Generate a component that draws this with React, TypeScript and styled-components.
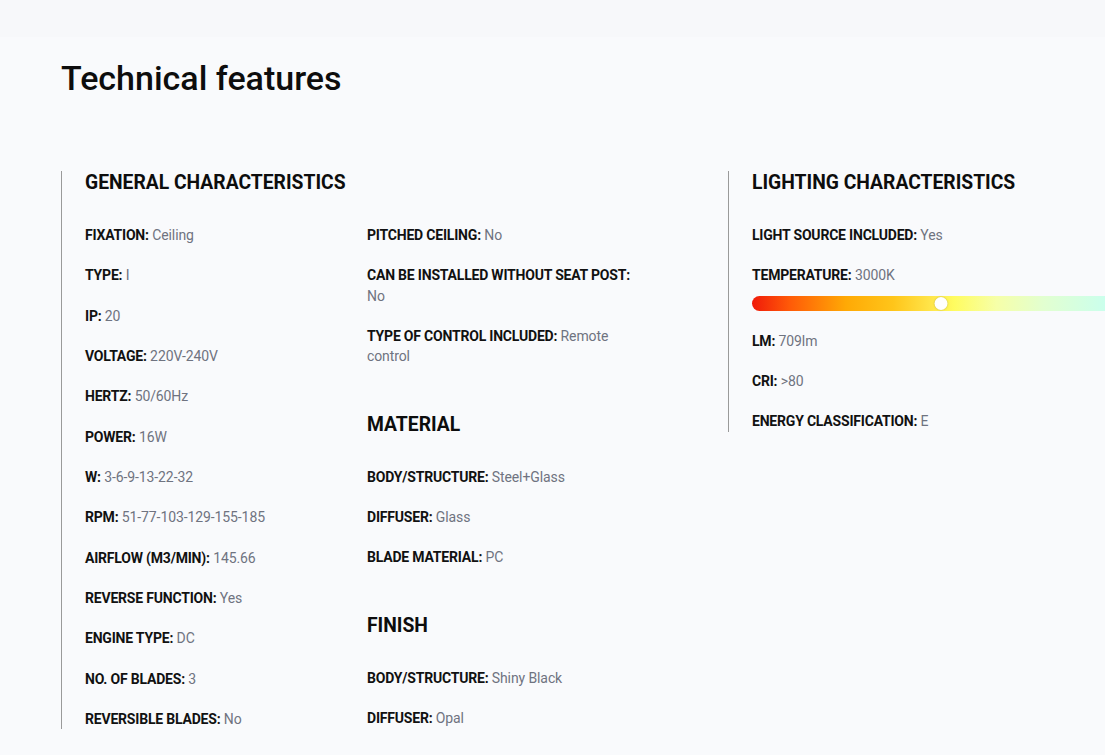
import React from "react";
import styled, { createGlobalStyle } from "styled-components";

const Global = createGlobalStyle`
  html, body {
    margin: 0;
    padding: 0;
    background: #f9fafc;
    overflow-x: hidden;
  }
  body {
    font-family: Roboto, "Liberation Sans", Arial, sans-serif;
    color: #111;
  }
`;

const TopBand = styled.div`
  height: 37px;
  background: #f7f8fa;
`;

const Page = styled.main`
  padding: 21px 0 0 61px;
  width: 1300px;
`;

const Title = styled.h1`
  margin: 0;
  font-size: 34px;
  font-weight: 500;
  line-height: 40px;
  color: #0d0d0d;
`;

const Sections = styled.div`
  margin-top: 73px;
  display: grid;
  grid-template-columns: 667px 1fr;
  align-items: start;
`;

const Block = styled.section`
  border-left: 1px solid #9a9a9a;
  padding-left: 23px;
`;

const Columns = styled.div`
  display: grid;
  grid-template-columns: 270px 270px;
  column-gap: 12px;
  align-items: start;
`;

const Heading = styled.h2<{ $top?: boolean }>`
  margin: ${(p) => (p.$top ? "0" : "46px")} 0 30px;
  font-size: 19.3px;
  font-weight: 700;
  line-height: 24px;
  color: #0d0d0d;
`;

const List = styled.div`
  display: flex;
  flex-direction: column;
  gap: 20px;
`;

const Item = styled.div`
  font-size: 14px;
  line-height: 1.453;
  color: #6f7380;
  letter-spacing: -0.1px;
`;

const Label = styled.span`
  font-weight: 700;
  color: #111;
  letter-spacing: -0.2px;
`;

const Track = styled.div`
  position: relative;
  width: 470px;
  height: 15px;
  border-radius: 8px;
  margin: -10px 0 0;
  background: linear-gradient(
    90deg,
    #f01a0a 0%,
    #ff5a08 8%,
    #ffa905 20%,
    #ffc51a 30%,
    #ffe54a 38%,
    #fffc60 43%,
    #f6ffa8 52%,
    #e2ffd0 62%,
    #cbffec 75%,
    #b9f0ff 100%
  );
`;

const Knob = styled.div`
  position: absolute;
  top: 1px;
  width: 13px;
  height: 13px;
  border-radius: 50%;
  background: #fff;
  box-shadow: 0 0 2px rgba(0, 0, 0, 0.25);
  transform: translateX(-50%);
`;

type Row = [string, string];

const general1: Row[] = [
  ["FIXATION", "Ceiling"],
  ["TYPE", "I"],
  ["IP", "20"],
  ["VOLTAGE", "220V-240V"],
  ["HERTZ", "50/60Hz"],
  ["POWER", "16W"],
  ["W", "3-6-9-13-22-32"],
  ["RPM", "51-77-103-129-155-185"],
  ["AIRFLOW (M3/MIN)", "145.66"],
  ["REVERSE FUNCTION", "Yes"],
  ["ENGINE TYPE", "DC"],
  ["NO. OF BLADES", "3"],
  ["REVERSIBLE BLADES", "No"],
];

const general2: Row[] = [
  ["PITCHED CEILING", "No"],
  ["CAN BE INSTALLED WITHOUT SEAT POST", "No"],
  ["TYPE OF CONTROL INCLUDED", "Remote control"],
];

const material: Row[] = [
  ["BODY/STRUCTURE", "Steel+Glass"],
  ["DIFFUSER", "Glass"],
  ["BLADE MATERIAL", "PC"],
];

const finish: Row[] = [
  ["BODY/STRUCTURE", "Shiny Black"],
  ["DIFFUSER", "Opal"],
];

const Rows = ({ rows }: { rows: Row[] }) => (
  <List>
    {rows.map(([k, v], i) => (
      <Item key={i}>
        <Label>{k}:</Label> {v}
      </Item>
    ))}
  </List>
);

export default function App() {
  const knobPos = 189;
  return (
    <>
      <Global />
      <TopBand />
      <Page>
        <Title>Technical features</Title>
        <Sections>
          <Block>
            <Heading $top>GENERAL CHARACTERISTICS</Heading>
            <Columns>
              <Rows rows={general1} />
              <div>
                <Rows rows={general2} />
                <Heading>MATERIAL</Heading>
                <Rows rows={material} />
                <Heading>FINISH</Heading>
                <Rows rows={finish} />
              </div>
            </Columns>
          </Block>
          <Block>
            <Heading $top>LIGHTING CHARACTERISTICS</Heading>
            <List>
              <Item>
                <Label>LIGHT SOURCE INCLUDED:</Label> Yes
              </Item>
              <Item>
                <Label>TEMPERATURE:</Label> 3000K
              </Item>
              <Track>
                <Knob style={{ left: `${knobPos}px` }} />
              </Track>
              <Item>
                <Label>LM:</Label> 709lm
              </Item>
              <Item>
                <Label>CRI:</Label> &gt;80
              </Item>
              <Item>
                <Label>ENERGY CLASSIFICATION:</Label> E
              </Item>
            </List>
          </Block>
        </Sections>
      </Page>
    </>
  );
}
